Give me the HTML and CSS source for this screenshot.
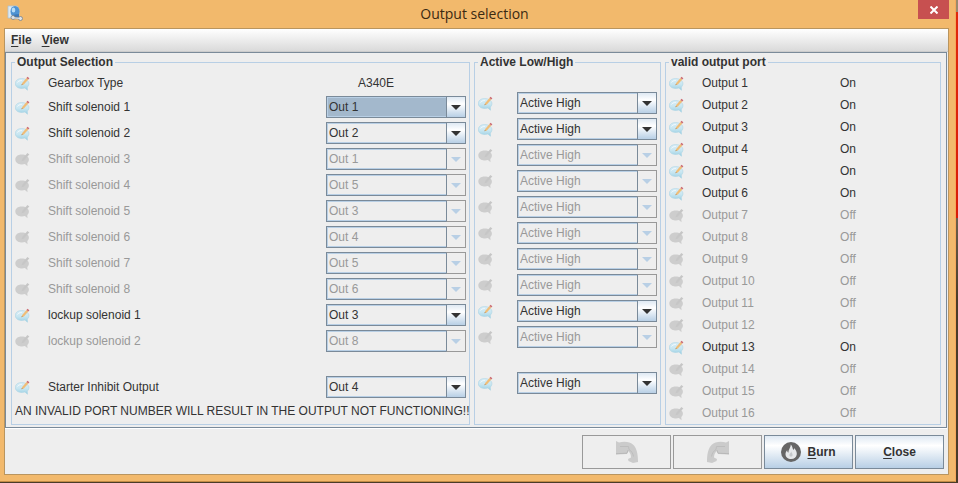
FILE: index.html
```
<!DOCTYPE html>
<html lang="en">
<head>
<meta charset="utf-8">
<title>Output selection</title>
<link rel="stylesheet" href="styles.css">
</head>
<body>
<svg class="defs" aria-hidden="true">
  <defs>
    <linearGradient id="bubble" x1="0" y1="0" x2="0" y2="1"><stop offset="0" stop-color="#daedf6"/><stop offset=".5" stop-color="#c8e6f1"/><stop offset="1" stop-color="#9ad0e4"/></linearGradient>
    <symbol id="note" viewBox="0 0 15 15">
      <path d="M6.500 2.600C2.700 2.600.3 4.800.3 7.600c0 2.400 1.900 4.300 4.700 4.700 1.800.3 3.500.2 4.900-.3l2.600 2.200-.2-3.200c1-.9 1.600-2 1.600-3.400 0-2.900-3.300-5-7.400-5z" fill="url(#bubble)" stroke="#a9d4e4" stroke-width=".6"/>
      <path d="M2.500 6.500c.8-1.300 2.200-2 4.300-2" fill="none" stroke="#f4fafd" stroke-width="1"/>
      <path d="M6.500 9.300l.7-2.200 4.300-5.200 1.800 1.500-4.500 5z" fill="#f0bd78"/>
      <path d="M6.500 9.300l.4-1.200.8.700z" fill="#8a7a66"/>
      <path d="M11.500 1.900l.9-1.200 2 1.500-1.100 1.200z" fill="#cc6a72"/>
    </symbol>
    <symbol id="note-off" viewBox="0 0 15 15">
      <path d="M6.500 2.600C2.700 2.600.3 4.800.3 7.600c0 2.400 1.900 4.300 4.700 4.700 1.800.3 3.500.2 4.900-.3l2.600 2.200-.2-3.200c1-.9 1.600-2 1.600-3.400 0-2.900-3.300-5-7.400-5z" fill="#cdcdcd"/>
      <path d="M6.500 9.300l.7-2.200 5.200-6.200 1.900 1.500-5.500 6z" fill="#c6c6c6"/>
    </symbol>
    <symbol id="turn" viewBox="0 0 22 22">
      <path d="M0 0l3 1.500C8 0 14 .5 17.500 4 20.500 7.500 22 12 22 21l-5 1-4.500-2-.5-2 3-1.500c0-3-1-5-3-6.500l-1 3-11 .5z" fill="#cbcbcb"/>
      <path d="M0 12.700l11-.5 1-3" fill="none" stroke="#b8b8b8" stroke-width="1"/>
      <path d="M4 5.500h8.500l.5 3c2.500 1.500 4 4 4.500 7" fill="none" stroke="#bdbdbd" stroke-width="1"/>
    </symbol>
  </defs>
</svg>
<div class="window">
  <header class="titlebar">
    <svg class="app-icon" viewBox="0 0 16 17" aria-hidden="true">
      <path d="M1 1h9l2 3v9H1z" fill="#dce9f3" stroke="#a9c2d6" stroke-width=".8"/>
      <ellipse cx="8" cy="6.500" rx="4.500" ry="5.500" fill="#4f93d2"/>
      <ellipse cx="6.500" cy="5" rx="1.800" ry="2.500" fill="#b7dcf6"/>
      <path d="M5 10l3 4h4V9z" fill="#3c78b7"/>
      <path d="M6.500 13h7" stroke="#77818b" stroke-width="2.400"/>
      <circle cx="6" cy="12.500" r="2" fill="#dfe4e8" stroke="#77818b" stroke-width=".8"/>
      <circle cx="13.500" cy="13.500" r="2" fill="#dfe4e8" stroke="#77818b" stroke-width=".8"/>
      <path d="M6.500 12.800l7 .5" stroke="#dfe4e8" stroke-width="1.200"/>
    </svg>
    <h1 class="title">Output selection</h1>
    <button class="close-x" type="button" aria-label="Close window"><svg viewBox="0 0 8 8" aria-hidden="true"><path d="M.5.5l7 7M7.500.5l-7 7"/></svg></button>
  </header>
  <main class="frame">
    <nav class="menubar">
      <button type="button"><u>F</u>ile</button>
      <button type="button"><u>V</u>iew</button>
    </nav>
    <form class="content">
      <div class="panels">
        <fieldset class="panel outputs">
          <legend>Output Selection</legend>
          <div class="row line"><svg class="note"><use href="#note"/></svg><span>Gearbox Type</span><output class="gearbox">A340E</output></div>
          <div class="row"><svg class="note"><use href="#note"/></svg><label for="s1">Shift solenoid 1</label><span class="combo focus"><select id="s1"><option>Out 1</option></select></span></div>
          <div class="row"><svg class="note"><use href="#note"/></svg><label for="s2">Shift solenoid 2</label><span class="combo"><select id="s2"><option>Out 2</option></select></span></div>
          <div class="row off"><svg class="note"><use href="#note-off"/></svg><label for="s3">Shift solenoid 3</label><span class="combo"><select id="s3" disabled><option>Out 1</option></select></span></div>
          <div class="row off"><svg class="note"><use href="#note-off"/></svg><label for="s4">Shift solenoid 4</label><span class="combo"><select id="s4" disabled><option>Out 5</option></select></span></div>
          <div class="row off"><svg class="note"><use href="#note-off"/></svg><label for="s5">Shift solenoid 5</label><span class="combo"><select id="s5" disabled><option>Out 3</option></select></span></div>
          <div class="row off"><svg class="note"><use href="#note-off"/></svg><label for="s6">Shift solenoid 6</label><span class="combo"><select id="s6" disabled><option>Out 4</option></select></span></div>
          <div class="row off"><svg class="note"><use href="#note-off"/></svg><label for="s7">Shift solenoid 7</label><span class="combo"><select id="s7" disabled><option>Out 5</option></select></span></div>
          <div class="row off"><svg class="note"><use href="#note-off"/></svg><label for="s8">Shift solenoid 8</label><span class="combo"><select id="s8" disabled><option>Out 6</option></select></span></div>
          <div class="row"><svg class="note"><use href="#note"/></svg><label for="l1">lockup solenoid 1</label><span class="combo"><select id="l1"><option>Out 3</option></select></span></div>
          <div class="row off"><svg class="note"><use href="#note-off"/></svg><label for="l2">lockup solenoid 2</label><span class="combo"><select id="l2" disabled><option>Out 8</option></select></span></div>
          <div class="row spaced"><svg class="note"><use href="#note"/></svg><label for="st">Starter Inhibit Output</label><span class="combo"><select id="st"><option>Out 4</option></select></span></div>
          <p class="warning">AN INVALID PORT NUMBER WILL RESULT IN THE OUTPUT NOT FUNCTIONING!!</p>
        </fieldset>
        <fieldset class="panel levels">
          <legend>Active Low/High</legend>
          <div class="row"><svg class="note"><use href="#note"/></svg><span class="combo"><select aria-label="Shift solenoid 1 level"><option>Active High</option></select></span></div>
          <div class="row"><svg class="note"><use href="#note"/></svg><span class="combo"><select aria-label="Shift solenoid 2 level"><option>Active High</option></select></span></div>
          <div class="row off"><svg class="note"><use href="#note-off"/></svg><span class="combo"><select aria-label="Shift solenoid 3 level" disabled><option>Active High</option></select></span></div>
          <div class="row off"><svg class="note"><use href="#note-off"/></svg><span class="combo"><select aria-label="Shift solenoid 4 level" disabled><option>Active High</option></select></span></div>
          <div class="row off"><svg class="note"><use href="#note-off"/></svg><span class="combo"><select aria-label="Shift solenoid 5 level" disabled><option>Active High</option></select></span></div>
          <div class="row off"><svg class="note"><use href="#note-off"/></svg><span class="combo"><select aria-label="Shift solenoid 6 level" disabled><option>Active High</option></select></span></div>
          <div class="row off"><svg class="note"><use href="#note-off"/></svg><span class="combo"><select aria-label="Shift solenoid 7 level" disabled><option>Active High</option></select></span></div>
          <div class="row off"><svg class="note"><use href="#note-off"/></svg><span class="combo"><select aria-label="Shift solenoid 8 level" disabled><option>Active High</option></select></span></div>
          <div class="row"><svg class="note"><use href="#note"/></svg><span class="combo"><select aria-label="Lockup solenoid 1 level"><option>Active High</option></select></span></div>
          <div class="row off"><svg class="note"><use href="#note-off"/></svg><span class="combo"><select aria-label="Lockup solenoid 2 level" disabled><option>Active High</option></select></span></div>
          <div class="row spaced"><svg class="note"><use href="#note"/></svg><span class="combo"><select aria-label="Starter inhibit level"><option>Active High</option></select></span></div>
        </fieldset>
        <fieldset class="panel ports">
          <legend>valid output port</legend>
          <div class="row line"><svg class="note"><use href="#note"/></svg><span>Output 1</span><output>On</output></div>
          <div class="row line"><svg class="note"><use href="#note"/></svg><span>Output 2</span><output>On</output></div>
          <div class="row line"><svg class="note"><use href="#note"/></svg><span>Output 3</span><output>On</output></div>
          <div class="row line"><svg class="note"><use href="#note"/></svg><span>Output 4</span><output>On</output></div>
          <div class="row line"><svg class="note"><use href="#note"/></svg><span>Output 5</span><output>On</output></div>
          <div class="row line"><svg class="note"><use href="#note"/></svg><span>Output 6</span><output>On</output></div>
          <div class="row line off"><svg class="note"><use href="#note-off"/></svg><span>Output 7</span><output>Off</output></div>
          <div class="row line off"><svg class="note"><use href="#note-off"/></svg><span>Output 8</span><output>Off</output></div>
          <div class="row line off"><svg class="note"><use href="#note-off"/></svg><span>Output 9</span><output>Off</output></div>
          <div class="row line off"><svg class="note"><use href="#note-off"/></svg><span>Output 10</span><output>Off</output></div>
          <div class="row line off"><svg class="note"><use href="#note-off"/></svg><span>Output 11</span><output>Off</output></div>
          <div class="row line off"><svg class="note"><use href="#note-off"/></svg><span>Output 12</span><output>Off</output></div>
          <div class="row line"><svg class="note"><use href="#note"/></svg><span>Output 13</span><output>On</output></div>
          <div class="row line off"><svg class="note"><use href="#note-off"/></svg><span>Output 14</span><output>Off</output></div>
          <div class="row line off"><svg class="note"><use href="#note-off"/></svg><span>Output 15</span><output>Off</output></div>
          <div class="row line off"><svg class="note"><use href="#note-off"/></svg><span>Output 16</span><output>Off</output></div>
        </fieldset>
      </div>
      <div class="actions">
        <button type="button" disabled aria-label="Undo"><svg class="turn"><use href="#turn"/></svg></button>
        <button type="button" disabled aria-label="Redo"><svg class="turn redo"><use href="#turn"/></svg></button>
        <button type="button"><svg class="flame" viewBox="0 0 20 20" aria-hidden="true"><circle cx="10" cy="10" r="10" fill="#666"/><path d="M9.800 2.500c2 2 1.500 4 2.600 5.500.6-.6.700-1.200.6-2 2 2 3 4.200 2.800 6.200-.3 3-2.600 4.800-5.600 4.800-3.300 0-5.700-1.900-5.700-4.800 0-1.700.7-2.800 1.700-3.900 0 1.200.4 2 1.100 2.500C7.300 7.500 9.900 5.500 9.800 2.500z" fill="#e6e8ea"/><path d="M10.300 9.500c.2 1.500 1.400 2 1.300 3.400-.1 1-.7 1.600-1.600 1.600s-1.600-.7-1.600-1.600c0-1.300 1.600-1.800 1.900-3.400z" fill="#c4c7ca"/></svg><span><u>B</u>urn</span></button>
        <button type="button"><span><u>C</u>lose</span></button>
      </div>
    </form>
  </main>
</div>
</body>
</html>
```
FILE: styles.css
```
*, *::before { box-sizing: border-box; }

body {
  margin: 0;
  padding: 0 2px 2px 0;
  min-height: 100vh;
  display: flex;
  background: linear-gradient(#9a8a6c 12px, #e0280c 12px, #d81c08 218px, #6b5f4c 218px, #4a3c28 300px);
  font: 12px/14px "Liberation Sans", Arial, sans-serif;
  color: #333;
}

button, select { font: inherit; color: inherit; margin: 0; }
button { padding: 0; border: 0; background: none; }
u { text-underline-offset: 2px; }
.defs { position: absolute; width: 0; height: 0; }

.window {
  flex: 1;
  display: flex;
  flex-direction: column;
  padding: 0 6px 6px 4px;
  background: #f2b96c;
  border-right: 1px solid #f6a85c;
  border-bottom: 1px solid #c28b45;
}

.titlebar {
  display: grid;
  grid-template-columns: 1fr auto 1fr;
  height: 28px;
}
.app-icon { width: 16px; height: 17px; margin: 5px 0 0 3px; }
.title {
  margin: 0 4px 0 0;
  font: 14px/28px "Open Sans", sans-serif;
  color: #3b2a12;
}
.close-x {
  justify-self: end;
  width: 31px;
  height: 19px;
  background: #c75050;
}
.close-x svg { display: block; width: 8px; height: 8px; margin: 0 auto; }
.close-x path { stroke: #fff; stroke-width: 2; }

.frame {
  flex: 1;
  display: flex;
  flex-direction: column;
  border: 1px solid #b9955f;
  background: #eee;
}
.menubar {
  display: flex;
  gap: 10px;
  height: 23px;
  padding: 0 6px;
  background: linear-gradient(#fff, #dadada);
  border-bottom: 1px solid #ccc;
  font-weight: bold;
}

.content { flex: 1; display: flex; flex-direction: column; }
.panels {
  display: flex;
  gap: 4px;
  padding: 2px 5px 2px 5px;
  margin-right: 1px;
  border: 1px solid #7a8a99;
  box-shadow: 0 1px #fff;
}
.panel {
  margin: 0;
  min-width: 0;
  padding: 3px 3px 0;
  border: 1px solid #b8cfe5;
}
.outputs { flex: 0 0 auto; }
.levels { flex: 0 0 auto; }
.ports { flex: 1; }
legend { padding: 0 2px; font-weight: bold; }

.row {
  display: grid;
  grid-template-columns: 33px 278px 140px;
  align-items: center;
  height: 26px;
}
.line { height: 22px; }
.off { color: #999; }
.spaced { margin-top: 20px; }
.gearbox { padding-left: 32px; }
.warning { width: 0; margin: 0; line-height: 22px; white-space: nowrap; }
.levels .row { grid-template-columns: 39px 140px; }
.levels legend + .row { margin-top: 18px; }
.ports .row { grid-template-columns: 33px 131px 30px; }
.ports output { text-align: center; }
.note { width: 15px; height: 15px; }

.combo { position: relative; display: block; height: 22px; }
.combo select {
  appearance: none;
  display: block;
  width: 100%;
  height: 22px;
  padding: 0 22px 0 2px;
  border: 1px solid #7a8a99;
  border-radius: 0;
  background: #eee;
  box-shadow: inset 0 0 0 1px #b8cfe5;
  opacity: 1;
}
.focus select { background: #a3b8cc; }
.combo::before {
  content: "";
  position: absolute;
  inset: 0 0 0 auto;
  width: 20px;
  border: 1px solid #7a8a99;
  background: linear-gradient(#dfe9f3, #fff 35%, #b8cfe5);
  pointer-events: none;
}
.combo::after {
  content: "";
  position: absolute;
  top: 9px;
  right: 5px;
  border: 5px solid transparent;
  border-top-color: #333;
  border-bottom: 0;
  pointer-events: none;
}
.off .combo::before { background: #eee; border-color: #999; border-left-color: #7a8a99; }
.off .combo::after { border-top-color: #b8cfe5; }

.actions {
  display: flex;
  justify-content: flex-end;
  gap: 2px;
  padding: 7px 4px 5px;
}
.actions button {
  display: flex;
  align-items: center;
  justify-content: center;
  gap: 6px;
  width: 89px;
  height: 34px;
  border: 1px solid #7a8a99;
  background: linear-gradient(#dfe9f3, #fff 30%, #b8cfe5);
  font-weight: bold;
}
.actions button:disabled { border-color: #999; background: #eee; }
.turn { width: 22px; height: 22px; }
.redo { transform: scaleX(-1); }
.flame { width: 20px; height: 20px; }
```
